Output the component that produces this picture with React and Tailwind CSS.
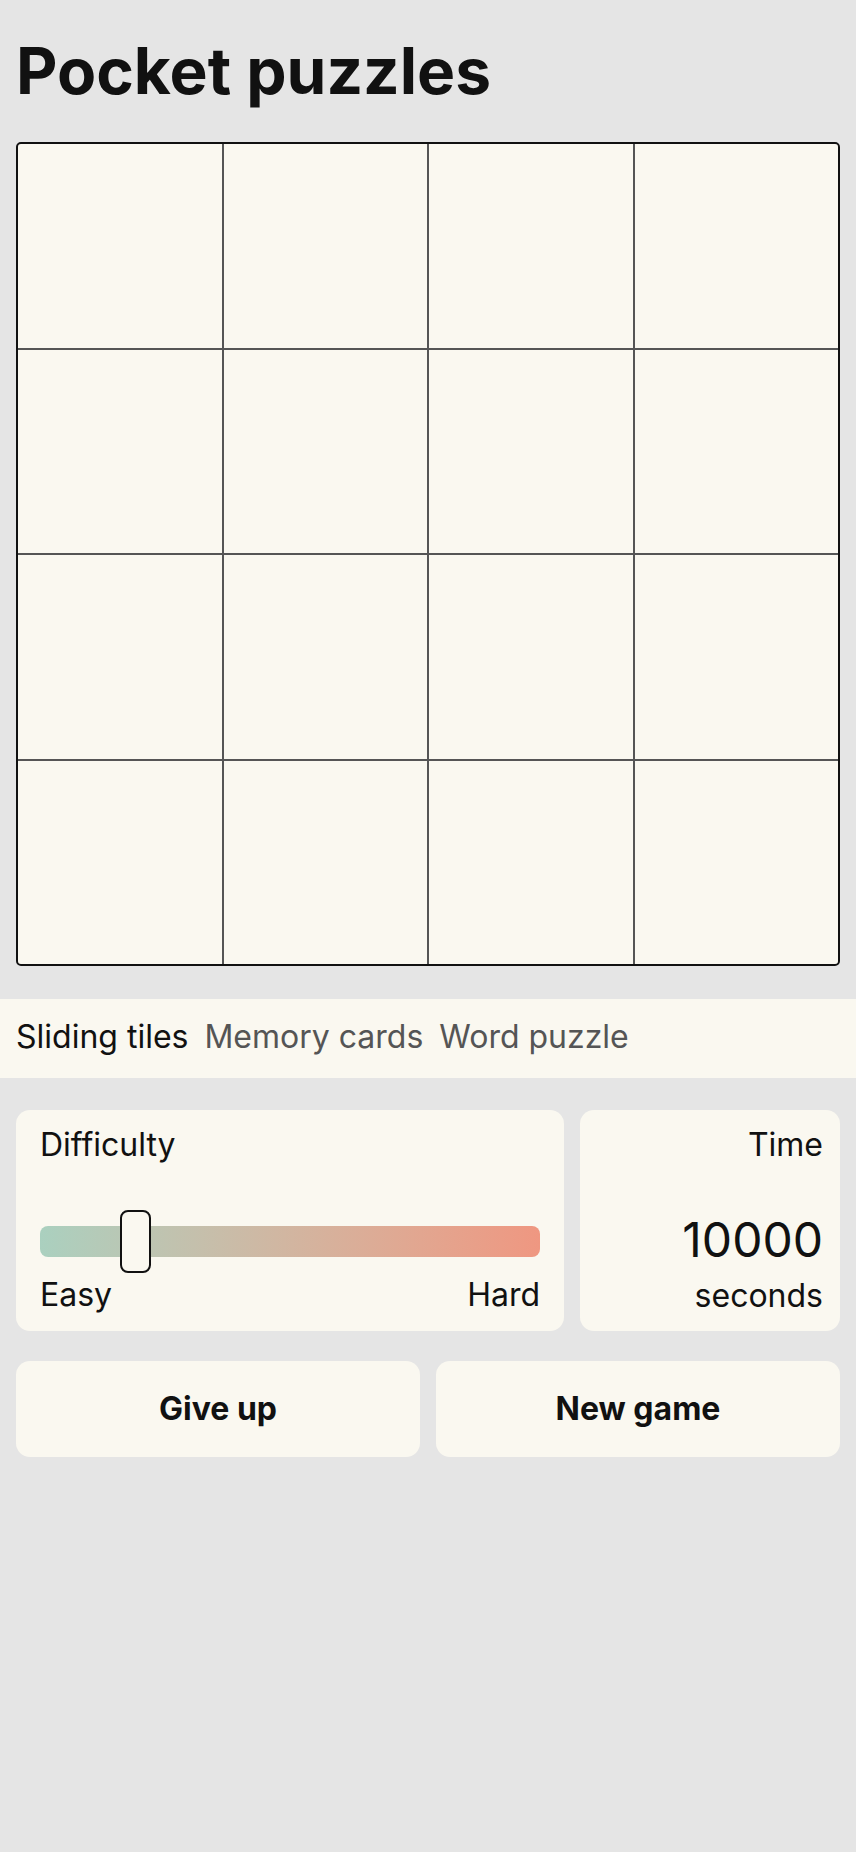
import { useState } from "react";

const tabs = ["Sliding tiles", "Memory cards", "Word puzzle"];

function Slider({ value }) {
  return (
    <div className="relative mt-[49px] h-[63px]">
      <div className="absolute left-0 right-0 top-[16px] h-[31px] rounded-[8px] bg-gradient-to-r from-[#aad0bf] to-[#ef9781]" />
      <div
        className="absolute top-0 h-[63px] w-[31px] rounded-[8px] border-2 border-[#111] bg-[#faf8f0]"
        style={{ left: `calc(${value}% - 15.5px)` }}
      />
    </div>
  );
}

export default function App() {
  const [active, setActive] = useState(0);

  return (
    <div
      className="min-h-[1852px] bg-[#e5e5e5] text-[#111]"
      style={{ fontFamily: "Inter, 'Noto Sans', sans-serif" }}
    >
      <div className="px-4">
        <h1 className="pt-[39px] text-[64px] font-bold leading-none">Pocket puzzles</h1>

        {/* board */}
        <div className="mt-[39px] grid aspect-square grid-cols-4 grid-rows-4 gap-[2px] overflow-hidden rounded-[5px] border-2 border-[#111] bg-[#555]">
          {Array.from({ length: 16 }).map((_, i) => (
            <div key={i} className="bg-[#faf8f0]" />
          ))}
        </div>
      </div>

      {/* tabs */}
      <div className="mt-[33px] flex h-[79px] gap-4 bg-[#faf8f0] px-4 pt-[22px]">
        {tabs.map((t, i) => (
          <button
            key={t}
            type="button"
            onClick={() => setActive(i)}
            className={
              "h-8 text-[32px] leading-none " +
              (active === i ? "text-[#111]" : "text-[#555]")
            }
          >
            {t}
          </button>
        ))}
      </div>

      <div className="px-4">
        {/* settings */}
        <div className="mt-[32px] flex gap-4">
          <div className="flex-1 rounded-[14px] bg-[#faf8f0] px-6 pb-[19px] pt-[19px]">
            <div className="text-[32px] leading-none">Difficulty</div>
            <Slider value={19} />
            <div className="mt-[6px] flex justify-between text-[32px] leading-none">
              <span>Easy</span>
              <span>Hard</span>
            </div>
          </div>
          <div className="flex w-[260px] flex-col items-end rounded-[14px] bg-[#faf8f0] pb-[19px] pr-[17px] pt-[19px]">
            <div className="text-[32px] leading-none">Time</div>
            <div className="mt-[55px] text-[48px] leading-none">10000</div>
            <div className="mt-[16px] text-[32px] leading-none">seconds</div>
          </div>
        </div>

        {/* actions */}
        <div className="mt-[30px] grid grid-cols-2 gap-4">
          <button
            type="button"
            className="h-[96px] rounded-[14px] bg-[#faf8f0] text-[32px] font-bold leading-none"
          >
            Give up
          </button>
          <button
            type="button"
            className="h-[96px] rounded-[14px] bg-[#faf8f0] text-[32px] font-bold leading-none"
          >
            New game
          </button>
        </div>
      </div>
    </div>
  );
}
